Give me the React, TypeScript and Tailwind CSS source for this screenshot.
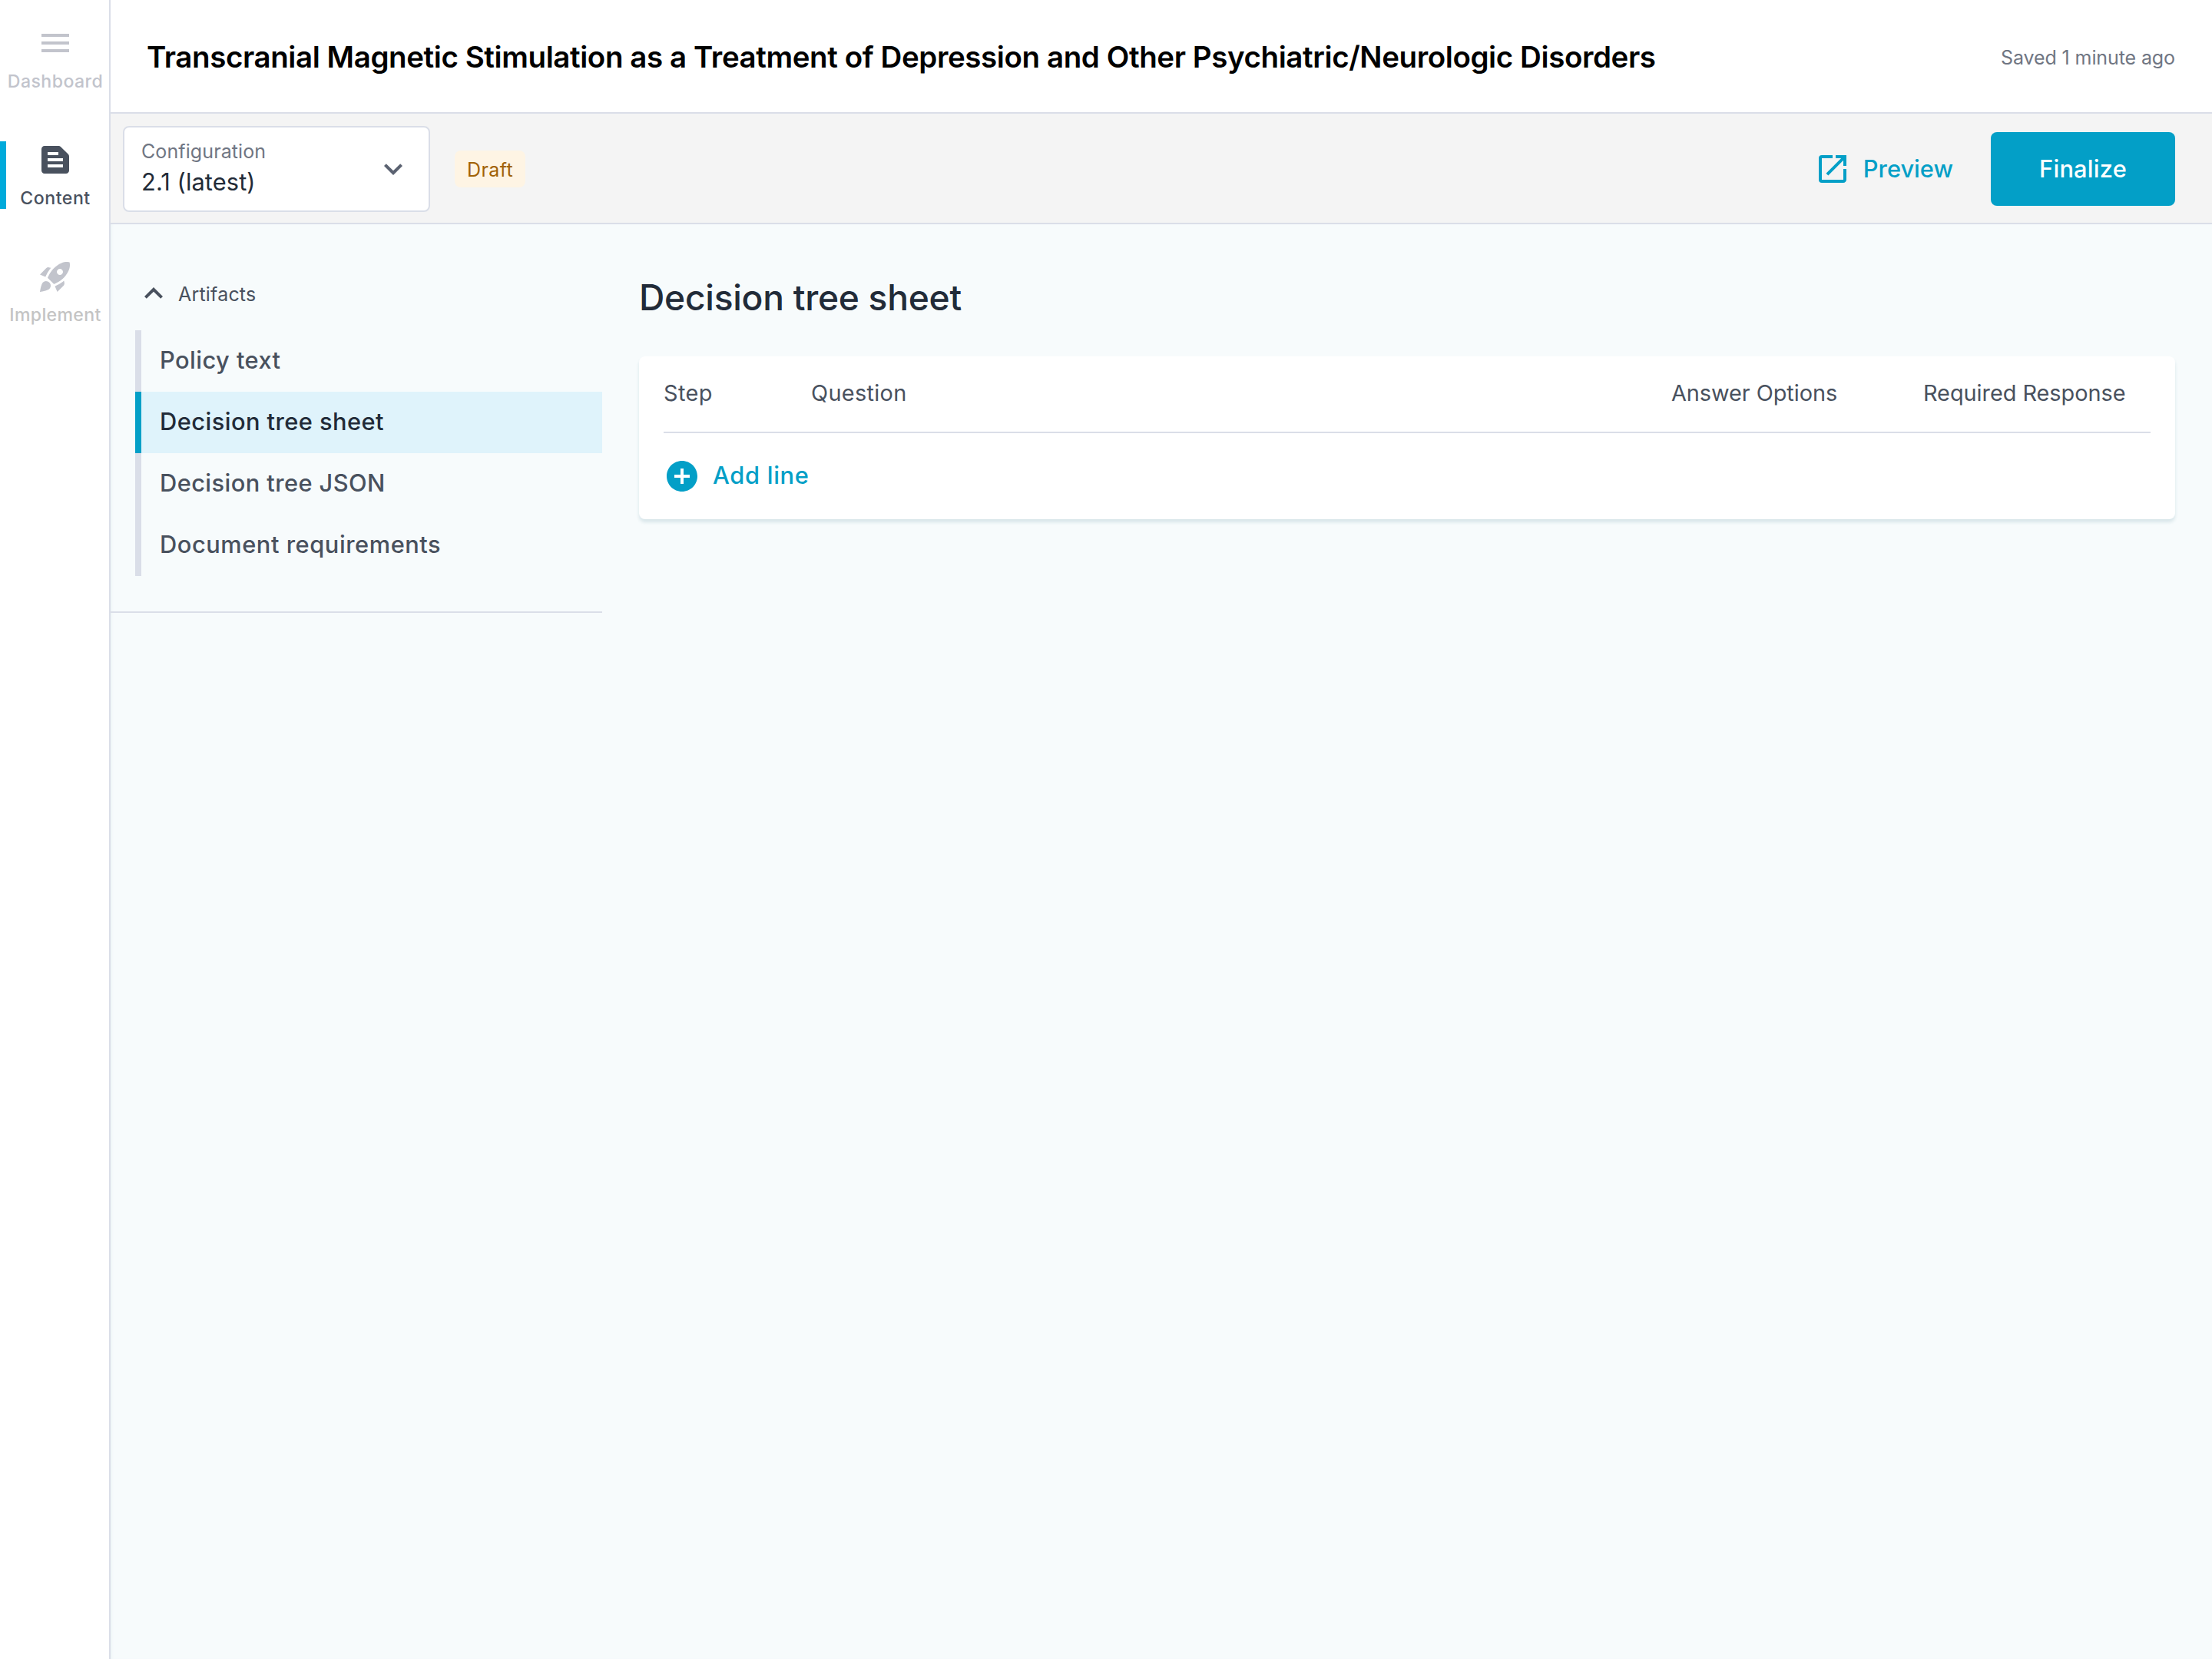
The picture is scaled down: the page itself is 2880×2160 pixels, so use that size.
import clsx from "clsx";
import {
  MdAddCircle,
  MdExpandLess,
  MdExpandMore,
  MdMenu,
  MdOpenInNew,
  MdTextSnippet,
} from "react-icons/md";

const artifacts = [
  { label: "Policy text", tracking: "tracking-[0.45px]" },
  { label: "Decision tree sheet", tracking: "tracking-[0.45px]", active: true },
  { label: "Decision tree JSON", tracking: "tracking-[0.42px]" },
  { label: "Document requirements", tracking: "tracking-[0.55px]" },
];

const RocketIcon = () => (
  <svg viewBox="0 0 24 24" className="size-12" fill="currentColor">
    <path d="M9.19 6.35c-2.04 2.29-3.44 5.58-3.57 5.89L2 10.69l4.05-4.05c.47-.47 1.15-.68 1.81-.55l1.33.26z" />
    <path
      fillRule="evenodd"
      d="M11.17 17s3.74-1.55 5.89-3.7c5.4-5.4 4.5-9.62 4.21-10.57-.95-.3-5.17-1.19-10.57 4.21C8.55 9.09 7 12.83 7 12.83L11.17 17zM13 9c0-1.1.9-2 2-2s2 .9 2 2-.9 2-2 2-2-.9-2-2z"
    />
    <path d="M17.65 14.81c-2.29 2.04-5.58 3.44-5.89 3.57L13.31 22l4.05-4.05c.47-.47.68-1.15.55-1.81l-.26-1.33z" />
    <path d="M9 18c0 .83-.34 1.58-.88 2.12C6.94 21.3 2 22 2 22s.7-4.94 1.88-6.12A2.996 2.996 0 0 1 9 18z" />
  </svg>
);

const SideNav = () => (
  <nav className="w-36 shrink-0 pl-[2px] border-r-2 border-[#dadee8] bg-white text-[23.1px] leading-8 font-medium">
    <div className="h-38 pt-8 flex flex-col items-center gap-[10px] text-[#c2c4cc]">
      <MdMenu size={48} />
      <span className="tracking-[0.44px]">Dashboard</span>
    </div>
    <div className="relative h-38 pt-8 flex flex-col items-center gap-[10px] text-[#49515e]">
      <div className="absolute -left-[2px] top-8 w-2 h-22 bg-[#00aadb]" />
      <MdTextSnippet size={48} />
      <span className="tracking-[0.55px]">Content</span>
    </div>
    <div className="h-38 pt-8 flex flex-col items-center gap-[10px] text-[#c2c4cc]">
      <RocketIcon />
      <span className="tracking-[0.35px] text-[#c4c4c4]">Implement</span>
    </div>
  </nav>
);

const Toolbar = () => (
  <div className="h-36 pt-[2px] pl-4 pr-12 flex items-center border-b-2 border-[#dadee8] bg-[#f4f4f4]">
    <button
      type="button"
      className="w-[400px] h-28 pl-[22px] pr-[22px] flex items-center justify-between border-2 border-[#dadee8] rounded-lg bg-white text-left"
    >
      <div className="flex flex-col">
        <span className="text-[25px] leading-9 tracking-[0.1px] text-[#707683]">
          Configuration
        </span>
        <span className="mb-[3px] text-[30.8px] leading-[44px] tracking-[0.1px] text-[#222b38]">
          2.1 (latest)
        </span>
      </div>
      <MdExpandMore size={48} className="text-[#5b6271]" />
    </button>
    <span className="ml-8 w-[92px] h-12 rounded-lg bg-[#fef4e4] text-center text-[25px] leading-[51px] tracking-[0.4px] text-[#a16207]">
      Draft
    </span>
    <button
      type="button"
      className="ml-auto mr-[49px] flex items-center gap-4 text-[30.8px] font-medium text-[#039fc7]"
    >
      <MdOpenInNew size={48} />
      Preview
    </button>
    <button
      type="button"
      className="w-60 h-24 rounded-lg bg-[#039fc7] text-[30.8px] font-medium tracking-[0.2px] text-white"
    >
      Finalize
    </button>
  </div>
);

const Artifacts = () => (
  <aside className="w-160 shrink-0 self-start pt-[66px] pl-8 pb-[46px] border-b-2 border-[#dadee8]">
    <button
      type="button"
      className="h-12 flex items-center gap-2 text-[25px] tracking-[0.2px] text-[#49515e]"
    >
      <MdExpandLess size={48} />
      <span className="pt-1">Artifacts</span>
    </button>
    <ul className="mt-6">
      {artifacts.map((item) => (
        <li
          key={item.label}
          className={clsx(
            "h-20 pl-6 border-l-8 text-[30.8px] leading-[78px] font-medium",
            item.tracking,
            item.active
              ? "border-[#039fc7] bg-[#dff3fb] text-[#222b38]"
              : "border-[#dadee8] text-[#49515e]"
          )}
        >
          {item.label}
        </li>
      ))}
    </ul>
  </aside>
);

const DecisionTable = () => (
  <section className="flex-1 pt-[67px] px-12">
    <h2 className="text-[46.2px] leading-14 font-medium tracking-[-0.28px] text-[#222b38]">
      Decision tree sheet
    </h2>
    <div className="mt-[49px] px-8 rounded-lg bg-white shadow-[0_4px_4px_#d8e6ea]">
      <div className="h-25 pb-[3px] grid grid-cols-[192px_1fr_328px_296px] items-center border-b-2 border-[#dadee8] text-[28.9px] text-[#49515e]">
        <span className="tracking-[0.4px]">Step</span>
        <span className="tracking-[0.3px]">Question</span>
        <span className="tracking-[-0.07px]">Answer Options</span>
        <span className="tracking-[-0.05px]">Required Response</span>
      </div>
      <button
        type="button"
        className="h-28 flex items-center gap-4 text-[30.8px] font-medium tracking-[0.7px] text-[#039fc7]"
      >
        <MdAddCircle size={48} />
        <span className="pb-px">Add line</span>
      </button>
    </div>
  </section>
);

const App = () => {
  return (
    <div className="flex h-[2160px] w-[2880px] overflow-hidden whitespace-nowrap bg-[#f7fbfc] font-['Inter',sans-serif]">
      <SideNav />
      <div className="flex-1 flex flex-col">
        <header className="h-37 shrink-0 pt-[3px] pl-[47px] pr-12 flex items-center justify-between border-b-2 border-[#dadee8] bg-white">
          <h1 className="text-[38.5px] font-semibold tracking-[-0.41px] text-black">
            Transcranial Magnetic Stimulation as a Treatment of Depression and
            Other Psychiatric/Neurologic Disorders
          </h1>
          <span className="pt-[2px] text-[25px] tracking-[-0.1px] text-[#707683]">
            Saved 1 minute ago
          </span>
        </header>
        <Toolbar />
        <main className="flex-1 flex shadow-[inset_3px_0_4px_-3px_#e3edf0]">
          <Artifacts />
          <DecisionTable />
        </main>
      </div>
    </div>
  );
};
export default App;
